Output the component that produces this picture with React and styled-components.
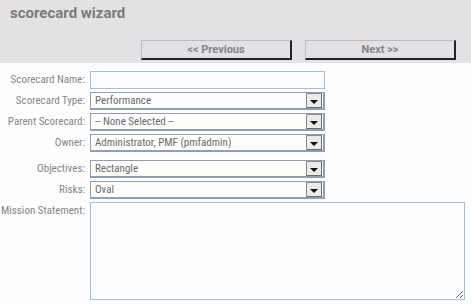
import React from 'react'
import styled, { createGlobalStyle } from 'styled-components';

const GlobalStyle = createGlobalStyle`
  html, body {
    margin: 0;
    padding: 0;
    background: #fdfefd;
  }
  body {
    font-family: "Liberation Sans Narrow", "Roboto Condensed", Roboto, sans-serif;
  }
`;

const Header = styled.div`
  height: 63px;
  background: #e4e1e4;
  display: flex;
  flex-direction: column;
  box-sizing: border-box;
  padding: 4px 0 0 10px;
`;

const Title = styled.h1`
  margin: 0;
  font-family: Roboto, "Liberation Sans", sans-serif;
  font-weight: bold;
  font-size: 15px;
  color: #7b7b7b;
  line-height: 18px;
`;

const NavBar = styled.div`
  display: flex;
  gap: 13px;
  margin: 18px 0 0 131px;
`;

const NavButton = styled.button`
  width: 151px;
  height: 20px;
  box-sizing: border-box;
  background: #e4e1e4;
  border-style: solid;
  border-width: 1px 2px 2px 1px;
  border-color: #bdbac8 #22202f #22202f #bdbac8;
  font-family: "Liberation Sans Narrow", Roboto, sans-serif;
  font-weight: bold;
  font-size: 11px;
  color: #858585;
  padding: 0;
`;

const Form = styled.div`
  display: grid;
  grid-template-columns: 85px 1fr;
  column-gap: 5px;
  row-gap: 3px;
  padding: 8px 6px 0 0;
`;

const Label = styled.label`
  text-align: right;
  font-size: 11px;
  color: #858585;
  line-height: 18px;
  margin-top: ${p => p.$gap ? '5px' : '0'};
  white-space: nowrap;
`;

const Field = styled.div`
  width: ${p => p.$wide ? '375px' : '235px'};
  margin-top: ${p => p.$gap ? '5px' : '0'};
`;

const TextInput = styled.input`
  display: block;
  width: 100%;
  height: 18px;
  box-sizing: border-box;
  border: 1px solid #9dc3dc;
  background: #fdfefd;
  outline: none;
`;

const SelectBox = styled.div`
  display: flex;
  align-items: center;
  height: 18px;
  box-sizing: border-box;
  border: 1px solid #8d9fb4;
  border-bottom-width: 2px;
  border-right-width: 2px;
  background: #fdfefd;
  padding-left: 4px;
  font-size: 11px;
  color: #6a6a6a;
`;

const SelectText = styled.span`
  flex: 1;
`;

const ArrowButton = styled.span`
  width: 16px;
  height: 15px;
  box-sizing: border-box;
  border: 1px solid #6b6b6b;
  border-left-color: #8a8a8a;
  border-top-color: #8a8a8a;
  background: #ebebeb;
  display: flex;
  justify-content: center;
  align-items: flex-end;
  padding-bottom: 3px;
  margin-right: 1px;

  &::after {
    content: '';
    border-left: 4px solid transparent;
    border-right: 4px solid transparent;
    border-top: 4px solid #111;
  }
`;

const TextArea = styled.textarea`
  display: block;
  width: 375px;
  height: 98px;
  box-sizing: border-box;
  border: 1px solid #9dc3dc;
  background: #fdfefd;
  resize: both;
  outline: none;
`;

const Select = ({ value, gap }) => (
  <Field $gap={gap}>
    <SelectBox>
      <SelectText>{value}</SelectText>
      <ArrowButton />
    </SelectBox>
  </Field>
);

const selects = [
  { label: 'Scorecard Type:', value: 'Performance' },
  { label: 'Parent Scorecard:', value: '-- None Selected --' },
  { label: 'Owner:', value: 'Administrator, PMF (pmfadmin)' },
  { label: 'Objectives:', value: 'Rectangle', gap: true },
  { label: 'Risks:', value: 'Oval' },
];

const App = () => {
  return (
    <>
      <GlobalStyle />
      <Header>
        <Title>scorecard wizard</Title>
        <NavBar>
          <NavButton>&lt;&lt; Previous</NavButton>
          <NavButton>Next &gt;&gt;</NavButton>
        </NavBar>
      </Header>
      <Form>
        <Label>Scorecard Name:</Label>
        <Field>
          <TextInput type="text" />
        </Field>
        {selects.map((s, index) => (
          <React.Fragment key={index}>
            <Label $gap={s.gap}>{s.label}</Label>
            <Select value={s.value} gap={s.gap} />
          </React.Fragment>
        ))}
        <Label>Mission Statement:</Label>
        <Field $wide>
          <TextArea />
        </Field>
      </Form>
    </>
  )
}

export default App
